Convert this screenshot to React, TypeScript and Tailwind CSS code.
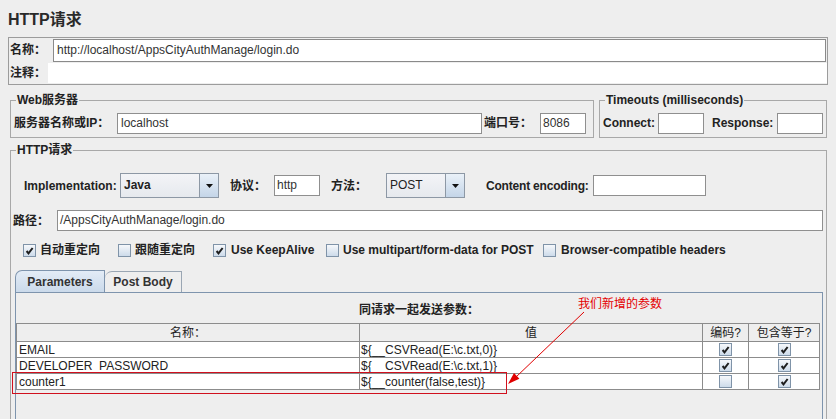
import React from 'react'

const FONT = "font-['Liberation_Sans','Noto_Sans_CJK_SC',sans-serif]"

// Metal-style checkbox
function Check({ on }: { on: boolean }) {
  return (
    <span className="inline-flex h-[13px] w-[13px] shrink-0 items-center justify-center border border-[#7f93a8] bg-linear-to-b from-[#f6f8fb] to-[#cddbea]">
      {on && (
        <svg width="9" height="9" viewBox="0 0 9 9">
          <path d="M1.6 5 L3.5 7.3 L7.6 2" fill="none" stroke="#1e1e1e" strokeWidth="2" />
        </svg>
      )}
    </span>
  )
}

function Arrow() {
  return (
    <svg width="7" height="4" viewBox="0 0 7 4">
      <path d="M0 0 H7 L3.5 4 Z" fill="#111" />
    </svg>
  )
}

function Select({ value, width, bold }: { value: string; width: string; bold?: boolean }) {
  return (
    <div className={`flex h-[25px] ${width} border border-[#8d98a5] bg-linear-to-b from-[#f3f4f7] to-[#e6e9ee]`}>
      <span className={`flex-1 pl-[3px] leading-[23px] ${bold ? 'font-bold' : ''}`}>{value}</span>
      <span className="flex w-[19px] items-center justify-center border-l border-[#8d98a5] bg-linear-to-b from-[#eaf1f8] to-[#c4d5e8]">
        <Arrow />
      </span>
    </div>
  )
}

function Input({ value, width, className = '' }: { value?: string; width: string; className?: string }) {
  return (
    <div className={`h-[21px] ${width} border border-[#8f8f8f] bg-white pl-[2px] leading-[19px] text-[#333] ${className}`}>
      {value}
    </div>
  )
}

const rows = [
  { name: 'EMAIL', value: '${__CSVRead(E:\\c.txt,0)}', enc: true, eq: true },
  { name: 'DEVELOPER_PASSWORD', value: '${__CSVRead(E:\\c.txt,1)}', enc: true, eq: true },
  { name: 'counter1', value: '${__counter(false,test)}', enc: false, eq: true },
]

export default function App() {
  return (
    <div className={`relative h-[419px] w-[836px] overflow-hidden bg-[#eeeeee] text-[12px] text-[#222] ${FONT}`}>
      {/* title */}
      <div className="h-[37px] pl-[8px] pt-[10px] text-[16px] leading-[20px] font-bold text-[#2a2a2a]">HTTP请求</div>

      {/* name / comment */}
      <div className="mx-[8px] h-[48px] border border-[#9c9c9c]">
        <div className="flex h-[24px] items-center">
          <span className="w-[44px] pl-[1px] font-bold">名称：</span>
          <div className="mr-[1px] h-[23px] flex-1 border border-[#8a8a8a] bg-white pl-[3px] leading-[21px] text-[#333]">
            http://localhost/AppsCityAuthManage/login.do
          </div>
        </div>
        <div className="flex h-[22px] items-center">
          <span className="w-[39px] pl-[1px] font-bold">注释：</span>
          <div className="h-[20px] flex-1 bg-white" />
        </div>
      </div>

      {/* web server + timeouts */}
      <div className="mt-[7px] flex">
        <fieldset className="ml-[10px] w-[584px] border border-[#a8a8a8]">
          <legend className="ml-[5px] px-[1px] leading-[16px] font-bold">Web服务器</legend>
          <div className="mt-[3px] mb-[2px] flex h-[24px] items-center">
            <span className="w-[106px] pl-[3px] font-bold">服务器名称或IP：</span>
            <Input value="localhost" width="w-[365px]" className="pl-[3px]" />
            <span className="w-[58px] pl-[2px] font-bold">端口号：</span>
            <Input value="8086" width="w-[46px]" />
          </div>
        </fieldset>
        <fieldset className="ml-[5px] w-[228px] border border-[#a8a8a8]">
          <legend className="ml-[5px] px-[1px] leading-[16px] font-bold">Timeouts (milliseconds)</legend>
          <div className="mt-[3px] mb-[2px] flex h-[24px] items-center">
            <span className="w-[58px] pl-[3px] font-bold">Connect:</span>
            <Input width="w-[46px]" />
            <span className="ml-[8px] w-[65px] font-bold">Response:</span>
            <Input width="w-[46px]" />
          </div>
        </fieldset>
      </div>

      {/* http request */}
      <fieldset className="mt-[4px] ml-[10px] h-[300px] w-[817px] border border-[#a8a8a8]">
        <legend className="ml-[5px] px-[1px] leading-[16px] font-bold">HTTP请求</legend>

        <div className="mt-[15px] flex h-[25px] items-center pl-[13px]">
          <span className="w-[96px] font-bold">Implementation:</span>
          <Select value="Java" width="w-[99px]" bold />
          <span className="ml-[11px] w-[44px] font-bold">协议：</span>
          <Input value="http" width="w-[46px]" />
          <span className="ml-[11px] w-[55px] font-bold">方法：</span>
          <Select value="POST" width="w-[79px]" />
          <span className="ml-[21px] w-[107px] font-bold tracking-[-0.2px]">Content encoding:</span>
          <Input value="" width="w-[113px]" />
        </div>

        <div className="mt-[12px] flex h-[21px] items-center pl-[2px]">
          <span className="w-[44px] font-bold">路径：</span>
          <Input value="/AppsCityAuthManage/login.do" width="w-[766px]" />
        </div>

        <div className="mt-[12px] flex h-[14px] items-center pl-[12px] font-bold">
          <label className="flex w-[95px] items-center gap-[4px]"><Check on />自动重定向</label>
          <label className="flex w-[95px] items-center gap-[4px]"><Check on={false} />跟随重定向</label>
          <label className="flex w-[113px] items-center gap-[5px]"><Check on />Use KeepAlive</label>
          <label className="flex w-[217px] items-center gap-[4px]"><Check on={false} />Use multipart/form-data for POST</label>
          <label className="flex items-center gap-[5px]"><Check on={false} />Browser-compatible headers</label>
        </div>

        {/* tabs */}
        <div className="mt-[13px] ml-[4px] w-[808px]">
          <div className="flex h-[22px] items-end">
            <div className="flex h-[22px] w-[90px] items-center justify-center rounded-tl-[7px] border border-b-0 border-[#7e94ad] bg-linear-to-b from-[#e3ecf6] to-[#cbdaeb] font-bold text-[#333]">
              Parameters
            </div>
            <div className="flex h-[21px] w-[77px] items-center justify-center rounded-tl-[7px] border border-b-0 border-l-0 border-[#9aa6b3] bg-[#eeeeee] font-bold text-[#333]">
              Post Body
            </div>
          </div>
          <div className="h-[200px] border border-b-0 border-[#7e94ad]">
            <div className="mt-[9px] h-[16px] text-center leading-[16px] font-bold">同请求一起发送参数：</div>
            <table className="mt-[5px] w-[803px] table-fixed border-collapse text-[#222]">
              <colgroup>
                <col className="w-[343px]" />
                <col className="w-[343px]" />
                <col className="w-[46px]" />
                <col className="w-[71px]" />
              </colgroup>
              <thead>
                <tr className="h-[18px] bg-[#eeeeee]">
                  <th className="border border-[#8c8c8c] p-0 text-center font-normal leading-[16px]">名称：</th>
                  <th className="border border-[#8c8c8c] p-0 text-center font-normal leading-[16px]">值</th>
                  <th className="border border-[#8c8c8c] p-0 text-center font-normal leading-[16px]">编码?</th>
                  <th className="border border-[#8c8c8c] p-0 text-center font-normal leading-[16px]">包含等于?</th>
                </tr>
              </thead>
              <tbody className="bg-white">
                {rows.map((r) => (
                  <tr key={r.name} className="h-[16px]">
                    <td className="border border-[#8c8c8c] p-0 pl-[2px] leading-[14px]">{r.name}</td>
                    <td className="border border-[#8c8c8c] p-0 pl-[1px] leading-[14px]">{r.value}</td>
                    <td className="border border-[#8c8c8c] p-0">
                      <div className="flex justify-center"><Check on={r.enc} /></div>
                    </td>
                    <td className="border border-[#8c8c8c] p-0">
                      <div className="flex justify-center"><Check on={r.eq} /></div>
                    </td>
                  </tr>
                ))}
              </tbody>
            </table>
          </div>
        </div>
      </fieldset>

      {/* red annotation */}
      <div className="absolute top-[296px] left-[578px] leading-[16px] text-[#e40000]">我们新增的参数</div>
      <div className="absolute top-[372px] left-[12px] h-[22px] w-[495px] border border-[#d0101e]" />
      <svg className="pointer-events-none absolute top-0 left-0" width="836" height="419">
        <line x1="584" y1="312" x2="515" y2="378" stroke="#e00000" strokeWidth="1" />
        <polygon points="508,384 519.4,378.7 514,372.9" fill="#e00000" />
      </svg>
    </div>
  )
}
